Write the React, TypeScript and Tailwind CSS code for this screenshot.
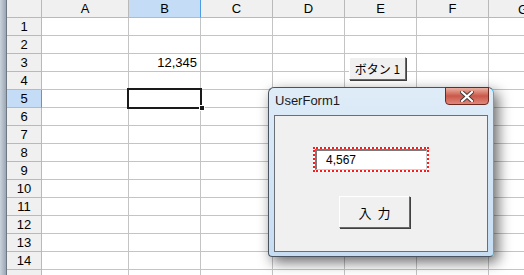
import React from "react";

const cols = [
  { label: "A", cls: "w-[87px]" },
  { label: "B", cls: "w-[72px]" },
  { label: "C", cls: "w-[72px]" },
  { label: "D", cls: "w-[72px]" },
  { label: "E", cls: "w-[72px]" },
  { label: "F", cls: "w-[72px]" },
  { label: "G", cls: "w-[72px]" },
];

const rows = Array.from({ length: 15 }, (_, i) => i + 1);

export default function App() {
  return (
    <div
      className="relative w-[524px] h-[275px] overflow-hidden bg-white text-black"
      style={{ fontFamily: '"Liberation Sans", "Noto Sans CJK JP", sans-serif' }}
    >
      <div className="flex h-full">
        {/* left strip */}
        <div className="w-[7px] shrink-0 h-full bg-gradient-to-r from-[#c9d3dd] to-[#9aa7b4] border-r border-r-[#6f7780]" />
        <div className="flex flex-col">
          {/* header row */}
          <div className="flex h-[18px] shrink-0">
            <div className="w-[35px] shrink-0 bg-[#f0f0f0] border-r border-b border-[#b9b9b9]" />
            {cols.map((c) => (
              <div
                key={c.label}
                className={
                  c.cls +
                  " shrink-0 flex items-center justify-center text-[13px] leading-none border-b " +
                  (c.label === "B"
                    ? "bg-[#c4dcf5] border-r border-r-[#4b9be6] border-b-[#b9b9b9]"
                    : "bg-[#f0f0f0] border-r border-[#b9b9b9]")
                }
              >
                {c.label === "G" ? "" : c.label}
              </div>
            ))}
          </div>
          {rows.map((r) => (
            <div key={r} className="flex h-[18px] shrink-0">
              <div
                className={
                  "w-[35px] shrink-0 flex items-center justify-center text-[13px] leading-none border-b " +
                  (r === 5
                    ? "bg-[#c4dcf5] border-r border-r-[#4b9be6] border-b-[#b9b9b9]"
                    : "bg-[#f0f0f0] border-r border-[#b9b9b9]")
                }
              >
                {r === 15 ? "" : r}
              </div>
              {cols.map((c) => (
                <div
                  key={c.label}
                  className={
                    c.cls +
                    " shrink-0 flex items-center justify-end pr-[3px] text-[13px] leading-none border-r border-b border-[#c4c4c4]"
                  }
                >
                  {r === 3 && c.label === "B" ? "12,345" : ""}
                </div>
              ))}
            </div>
          ))}
        </div>
      </div>

      {/* partially visible G header */}
      <div className="absolute left-[518px] top-[3px] text-[13px] leading-none">G</div>

      {/* selected cell B5 */}
      <div className="absolute left-[127px] top-[88px] w-[75px] h-[21px] border-[2px] border-[#1a1a1a]" />
      <div className="absolute left-[199px] top-[105px] w-[6px] h-[6px] bg-[#1a1a1a] border border-white" />

      {/* ボタン 1 */}
      <div
        className="absolute left-[349px] top-[57px] w-[57px] h-[23px] bg-[#f0f0f0] border border-t-white border-l-white border-r-[#6a6a6a] border-b-[#6a6a6a] shadow-[1px_1px_0_#404040] flex items-center justify-center text-[12px] leading-none whitespace-nowrap"
        style={{ fontFamily: '"Noto Sans CJK JP", sans-serif' }}
      >
        ボタン 1
      </div>

      {/* UserForm window */}
      <div className="absolute left-[268px] top-[87px] w-[226px] h-[170px] rounded-t-[6px] rounded-b-[4px] border border-[#4a5460] border-r-[#29b6e8] bg-gradient-to-b from-[#dfecf8] via-[#d3e5f6] to-[#c6ddf2] shadow-[4px_5px_14px_rgba(0,0,0,0.6)] flex flex-col px-[5px] pb-[4px]">
        <div className="h-[27px] shrink-0 flex items-start justify-between">
          <div className="pt-[6px] pl-[1px] text-[13px] leading-none text-[#1a1a1a]">UserForm1</div>
          <div className="w-[44px] h-[18px] -mt-[1px] -mr-[1px] rounded-b-[4px] border border-[#6b2a1f] bg-gradient-to-b from-[#eab0a2] via-[#c9584a] to-[#e0877a] flex items-center justify-center">
            <svg width="14" height="11" viewBox="0 0 14 11">
              <path d="M2 1 L12 10 M12 1 L2 10" stroke="#3a3a3a" strokeWidth="4" strokeLinecap="square" />
              <path d="M2 1 L12 10 M12 1 L2 10" stroke="#ffffff" strokeWidth="2.2" strokeLinecap="square" />
            </svg>
          </div>
        </div>
        <div className="flex-1 bg-[#f0f0f0] border border-[#6a6f75] flex flex-col items-start">
          <div className="mt-[31px] ml-[38px] w-[116px] h-[25px] border-2 border-dotted border-[#ff1a1a] bg-white">
            <div className="w-full h-full border-t-2 border-l-2 border-t-[#7a7a7a] border-l-[#7a7a7a] border-r border-b border-r-[#d0d0d0] border-b-[#d0d0d0] flex items-center pl-[9px] text-[12px] leading-none">
              4,567
            </div>
          </div>
          <div
            className="mt-[24px] ml-[64px] w-[71px] h-[32px] bg-[#f0f0f0] border border-t-white border-l-white border-r-[#6a6a6a] border-b-[#6a6a6a] shadow-[1px_1px_0_#404040] flex items-center justify-center text-[13px] leading-none"
            style={{ fontFamily: '"Noto Sans CJK JP", sans-serif' }}
          >
            入&nbsp;&nbsp;力
          </div>
        </div>
      </div>
    </div>
  );
}
